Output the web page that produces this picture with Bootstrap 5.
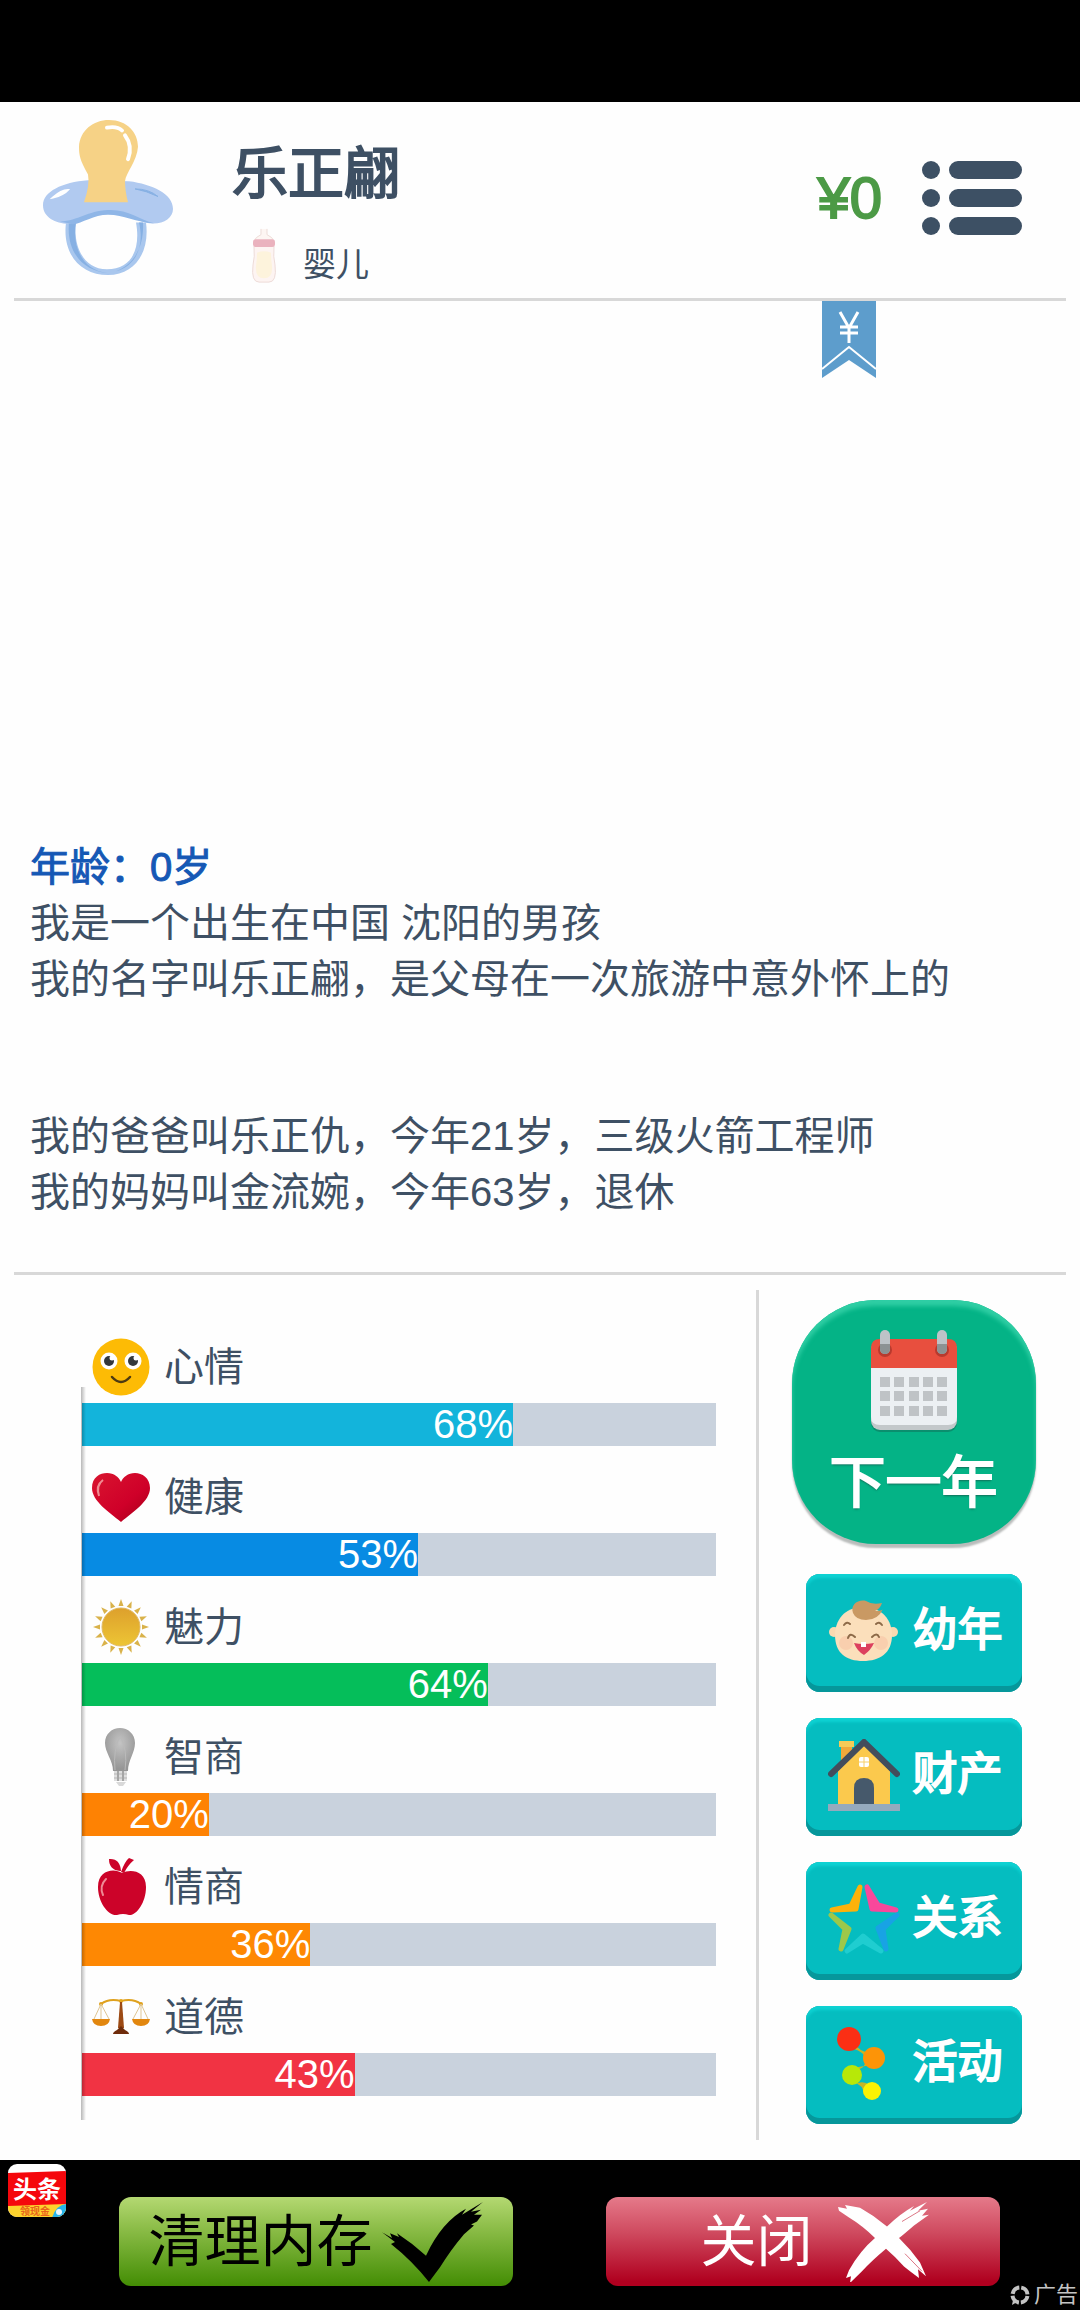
<!DOCTYPE html>
<html lang="zh-CN">
<head>
<meta charset="utf-8">
<meta name="viewport" content="width=device-width, initial-scale=1">
<title>人生模拟</title>
<link href="https://cdn.jsdelivr.net/npm/bootstrap@5.3.0/dist/css/bootstrap.min.css" rel="stylesheet">
<style>
  body { font-family: "Liberation Sans", "Noto Sans CJK SC", sans-serif; color: #3e5064; background: #fefefe; font-size: 40px; line-height: 56px; }
  svg { display: block; flex: none; }
  .status-strip { height: 102px; background: #000; }
  .profile { min-height: 199px; margin: 0 14px; border-bottom: 3px solid #d8d8d8; padding: 0 44px 5px 28px; }
  .profile-info { padding-top: 31px; margin-left: 58px; }
  .profile-name { font-size: 56px; line-height: 64px; margin: 0 0 21px; font-weight: 400; -webkit-text-stroke: 2px #3e5064; }
  .stage { font-size: 33px; line-height: 38px; gap: 26px; padding-left: 19px; }
  .money { font-size: 58px; line-height: 64px; color: #4c9a46; -webkit-text-stroke: 2px #4c9a46; margin-right: 40px; }
  .ribbon { top: 100%; right: 190px; margin-top: 3px; }
  .diary { padding: 0 30px 52px; }
  .diary p { margin: 0; }
  .diary .age { font-size: 40px; line-height: 56px; color: #1558b5; margin: 0; font-weight: 400; -webkit-text-stroke: 1px #1558b5; }
  .diary .parents { margin-top: 101px; }
  .panel-top { border-top: 3px solid #d8d8d8; margin: 0 14px; }
  .stats { flex: 0 0 70%; padding: 41px 40px 0 82px; }
  .stats-list::before { content: ""; position: absolute; left: -1px; top: 71px; bottom: -24px; width: 5px; background: linear-gradient(90deg, rgba(0,0,0,.28), rgba(0,0,0,0)); z-index: 1; }
  .stat-label { height: 87px; padding: 14px 0 0 10px; gap: 14px; }
  .stat-bar { height: 43px; border-radius: 0; background: #c9d2dd; font-size: 40px; }
  .stat-bar .progress-bar { text-align: right; color: #fff; line-height: 43px; }
  .actions { border-left: 3px solid #d8d8d8; margin: 15px 0 20px; padding: 10px 12px 16px 0; gap: 26px; }
  .next-year { width: 244px; height: 244px; margin-bottom: 4px; border: 0; border-radius: 84px; background: #04b386; color: #fff; font-size: 56px; line-height: 64px; gap: 18px; box-shadow: inset 0 6px 4px #2fcea4, 0 4px 2px #b9bcbb; text-shadow: 0 2px 2px #11705a; -webkit-text-stroke: 2px #fff; padding: 0; }
  .act { width: 216px; height: 118px; border: 0; border-radius: 14px; background: #05bdc0; color: #fff; font-size: 45px; line-height: 56px; gap: 12px; padding: 0 0 4px 4px; box-shadow: inset 0 -6px 0 #06979b, inset 0 4px 3px #0ed2d3, inset 0 0 2px #067f82; text-shadow: 0 -1px 1px #0b6062; -webkit-text-stroke: 2px #fff; }
  .dock { background: #000; min-height: 150px; padding: 37px 80px 24px 119px; }
  .dock-btn { width: 394px; height: 89px; border: 0; border-radius: 12px; font-size: 56px; line-height: 64px; padding: 0; }
  .clean { background: linear-gradient(#b4d872, #8cbd48 35%, #438d04); color: #000; gap: 9px; }
  .close-ad { background: linear-gradient(#e57a8a, #cf4a5f 40%, #b0001f 95%); color: #fff; gap: 25px; padding-left: 24px; }
  .app-logo { left: 8px; top: 4px; }
  .ad-tag { right: 2px; bottom: 3px; font-size: 22px; line-height: 24px; color: #c4c4c4; gap: 4px; }
</style>
<script src="https://cdn.jsdelivr.net/npm/bootstrap@5.3.0/dist/js/bootstrap.bundle.min.js"></script>
</head>
<body>
<div class="d-flex flex-column min-vh-100">
  <div class="status-strip"></div>

  <header class="profile d-flex align-items-center position-relative">
    <svg width="132" height="157" viewBox="0 0 132 164" preserveAspectRatio="none" aria-hidden="true">
      <path d="M24 108 C20 142 39 163 66 163 C93 163 108 139 104 108 L94 108 C99 137 89 157 65 157 C41 157 31 132 34 108 Z" fill="#a9c7ee"/>
      <path d="M27 108 C24 140 42 159 66 161 C38 158 30 130 34 108 Z" fill="#86b0e3"/>
      <path d="M97 108 C103 134 93 154 74 159 C96 150 102 128 101 108Z" fill="#86b0e3"/>
      <path d="M46 64 C20 66 1 76 1 90 C1 104 17 111 31 109 C44 105 50 100 64 99 C80 98 90 104 103 108 C118 112 131 105 131 94 C131 78 110 68 87 65 Z" fill="#b1caf0"/>
      <path d="M18 107 C37 106 45 96 66 95 C86 94 97 105 112 109 C94 108 82 100 66 100 C52 100 40 109 31 110Z" fill="#8fb6e7"/>
      <path d="M11 82 q8 -8 15 -8 q-4 5 -15 8z" fill="#fff" stroke="#fff" stroke-width="2"/>
      <path d="M93 73 q11 2 23 8 q-9 -8 -23 -8z" fill="#86b0e3" stroke="#86b0e3"/>
      <path d="M42 87 Q48 69 46 58 C38 43 37 38 37 29 C38 12 51 1 67 1 C85 1 96 14 96 29 C95 44 84 56 83 65 Q83 75 86 87 Z" fill="#f6d286"/>
      <path d="M65 9 Q75 7 80 12 M83 17 Q91 28 86 42" fill="none" stroke="#fff" stroke-width="4" stroke-linecap="round"/>
    </svg>
    <div class="profile-info">
      <h1 class="profile-name">乐正翩</h1>
      <div class="stage d-flex align-items-end">
        <svg width="26" height="57" viewBox="0 0 26 60" preserveAspectRatio="none" aria-hidden="true">
          <path d="M10 2v6q-6 3-7 7h20q-1-4-7-7V2" fill="#fdf6f3" stroke="#ecdcd7"/>
          <path d="M3 20 Q4 32 2 40 Q0 58 8 58 H18 Q26 58 24 40 Q22 32 23 20Z" fill="#fdf4f2" stroke="#ecdad7"/>
          <path d="M6 27 Q13 24 20 27 Q20 34 21 41 Q22 54 13 54 Q4 54 5 41 Q6 34 6 27Z" fill="#fdf3dc"/>
          <rect x="2" y="13" width="22" height="8" rx="3" fill="#eab2be"/>
        </svg>
        <span>婴儿</span>
      </div>
    </div>
    <span class="money ms-auto">¥0</span>
    <button type="button" class="btn p-0 border-0" aria-label="菜单">
      <svg width="100" height="76" viewBox="0 0 100 76" fill="#3d5064"><circle cx="9" cy="10" r="9"/><circle cx="9" cy="38" r="9"/><circle cx="9" cy="66" r="9"/><rect x="27" y="1" width="73" height="18" rx="9"/><rect x="27" y="29" width="73" height="18" rx="9"/><rect x="27" y="57" width="73" height="18" rx="9"/></svg>
    </button>
    <svg class="ribbon position-absolute" width="54" height="77" viewBox="0 0 54 77" aria-hidden="true">
      <path d="M0 0H54V77L27 59L0 77Z" fill="#5d9dcc"/>
      <path d="M0 68L27 46L54 68" fill="none" stroke="#fff" stroke-width="2"/>
      <path d="M18 11L27 27L36 11M27 27V42M18 26H36M18 32H36" fill="none" stroke="#fff" stroke-width="3"/>
    </svg>
  </header>

  <main class="flex-grow-1 d-flex flex-column">
    <section class="diary flex-grow-1 d-flex flex-column justify-content-end">
      <h2 class="age">年龄：0岁</h2>
      <p>我是一个出生在中国 沈阳的男孩</p>
      <p>我的名字叫乐正翩，是父母在一次旅游中意外怀上的</p>
      <p class="parents">我的爸爸叫乐正仇，今年21岁，三级火箭工程师</p>
      <p>我的妈妈叫金流婉，今年63岁，退休</p>
    </section>
    <div class="panel-top"></div>
    <section class="d-flex">
      <div class="stats">
        <div class="stats-list position-relative">
          <div class="stat-label d-flex align-items-center">
            <svg width="58" height="58" viewBox="0 0 58 58" aria-hidden="true"><circle cx="29" cy="29" r="28.500" fill="#fdbb05"/><circle cx="17" cy="23" r="8.500" fill="#fff"/><circle cx="41" cy="23" r="8.500" fill="#fff"/><circle cx="17" cy="23" r="5" fill="#33383c"/><circle cx="41" cy="23" r="5" fill="#33383c"/><circle cx="20" cy="20" r="2.500" fill="#fff"/><circle cx="44" cy="20" r="2.500" fill="#fff"/><path d="M20 39Q29 49 38 39" fill="none" stroke="#4d3a12" stroke-width="2.500" stroke-linecap="round"/></svg>
            <span id="s1">心情</span>
          </div>
          <div class="progress stat-bar" role="progressbar" aria-labelledby="s1" aria-valuenow="68" aria-valuemin="0" aria-valuemax="100"><div class="progress-bar" style="width:68%;background:#13b4db">68%</div></div>

          <div class="stat-label d-flex align-items-center">
            <svg width="58" height="58" viewBox="0 0 58 58" aria-hidden="true"><defs><linearGradient id="hg" x1="0" y1="0" x2="1" y2="1"><stop offset="0" stop-color="#d9152f"/><stop offset=".6" stop-color="#cf0029"/><stop offset="1" stop-color="#a30018"/></linearGradient></defs><path d="M29 54C17 44 0 33 0 20C0 9 8 5 15 5C22 5 27 9 29 14C31 9 36 5 43 5C50 5 58 10 58 20C58 33 41 44 29 54Z" fill="url(#hg)"/><path d="M11 12Q3 18 7 28Q4 17 11 12Z" fill="#f9a9ac" stroke="#f08c92" stroke-width="2"/></svg>
            <span id="s2">健康</span>
          </div>
          <div class="progress stat-bar" role="progressbar" aria-labelledby="s2" aria-valuenow="53" aria-valuemin="0" aria-valuemax="100"><div class="progress-bar" style="width:53%;background:#078be3">53%</div></div>

          <div class="stat-label d-flex align-items-center">
            <svg width="58" height="58" viewBox="0 0 58 58" aria-hidden="true"><defs><linearGradient id="sg" x1="0" y1="0" x2="0" y2="1"><stop offset="0" stop-color="#dda02c"/><stop offset="1" stop-color="#edc535"/></linearGradient><g id="ray"><path d="M29 1L31.500 8H26.500Z"/></g><g id="rq"><use href="#ray"/><use href="#ray" transform="rotate(22.500 29 29)"/><use href="#ray" transform="rotate(45 29 29)"/><use href="#ray" transform="rotate(67.500 29 29)"/></g></defs><g fill="#d9b24a"><use href="#rq"/><use href="#rq" transform="rotate(90 29 29)"/><use href="#rq" transform="rotate(180 29 29)"/><use href="#rq" transform="rotate(270 29 29)"/></g><circle cx="29" cy="29" r="19" fill="url(#sg)" stroke="#e0b860"/></svg>
            <span id="s3">魅力</span>
          </div>
          <div class="progress stat-bar" role="progressbar" aria-labelledby="s3" aria-valuenow="64" aria-valuemin="0" aria-valuemax="100"><div class="progress-bar" style="width:64%;background:#05be5a">64%</div></div>

          <div class="stat-label d-flex align-items-center">
            <svg width="58" height="58" viewBox="0 0 58 58" aria-hidden="true"><defs><radialGradient id="bg" cx=".5" cy=".35" r=".6"><stop offset="0" stop-color="#c4c4c4"/><stop offset="1" stop-color="#969696"/></radialGradient></defs><path d="M28 0C20 0 13 6 13 15C13 25 21 32 21 43H36C36 32 43 25 43 15C43 6 36 0 28 0Z" fill="url(#bg)"/><path d="M23 42Q21 22 28 8Q36 22 33 42" fill="none" stroke="#bababa"/><path d="M22 43H35V53H22Z" fill="#dedede"/><path d="M22 46h13M22 50h13" stroke="#b5b5b5"/><path d="M26 43V53M31 43V53" stroke="#a5a5a5" stroke-width="2"/><path d="M24 54h10l-3 4h-4z" fill="#d8d8d8"/></svg>
            <span id="s4">智商</span>
          </div>
          <div class="progress stat-bar" role="progressbar" aria-labelledby="s4" aria-valuenow="20" aria-valuemin="0" aria-valuemax="100"><div class="progress-bar" style="width:20%;background:#fe8203">20%</div></div>

          <div class="stat-label d-flex align-items-center">
            <svg width="58" height="58" viewBox="0 0 58 58" aria-hidden="true"><g fill="#cc0329"><path d="M30 15C38 11 54 12 54 29C54 45 44 58 37 57Q31 55 25 57C16 58 6 44 6 29C6 12 22 10 30 15Z"/><path d="M28 13Q17 12 17 1Q28 0 29 13Z"/><path d="M29 14Q33 3 37 0L42 2Q36 7 32 15Z"/></g><path d="M14 21Q7 28 11 37" fill="none" stroke="#ee8b95" stroke-width="2" stroke-linecap="round"/></svg>
            <span id="s5">情商</span>
          </div>
          <div class="progress stat-bar" role="progressbar" aria-labelledby="s5" aria-valuenow="36" aria-valuemin="0" aria-valuemax="100"><div class="progress-bar" style="width:36%;background:#fe8803">36%</div></div>

          <div class="stat-label d-flex align-items-center">
            <svg width="58" height="58" viewBox="0 0 58 58" aria-hidden="true"><path d="M9 16Q17 10 29 13Q41 10 49 16" fill="none" stroke="#dfa11d" stroke-width="2"/><circle cx="29" cy="13" r="2" fill="#e4a51c"/><circle cx="9" cy="16" r="2" fill="#dfa11d"/><circle cx="49" cy="16" r="2" fill="#dfa11d"/><path d="M9 16L2 31M9 16V31M9 16L17 31M49 16L41 31M49 16V31M49 16L56 31" stroke="#dfc694" fill="none"/><path d="M0 31H18Q17 38 9 38Q1 38 0 31ZM40 31H58Q57 38 49 38Q41 38 40 31Z" fill="#e2870f"/><path d="M28 14H30L32 40H26Z" fill="#9c4a14"/><path d="M21 46Q21 44 25 42L29 38L33 42Q37 44 37 46Z" fill="#6f2c0b"/></svg>
            <span id="s6">道德</span>
          </div>
          <div class="progress stat-bar" role="progressbar" aria-labelledby="s6" aria-valuenow="43" aria-valuemin="0" aria-valuemax="100"><div class="progress-bar" style="width:43%;background:#f13343">43%</div></div>
        </div>
      </div>

      <div class="actions flex-grow-1 d-flex flex-column align-items-center">
        <button type="button" class="next-year d-flex flex-column align-items-center justify-content-center">
          <svg width="88" height="104" viewBox="0 0 88 104" aria-hidden="true">
            <rect x="1" y="14" width="86" height="89" rx="9" fill="#0b8f6e"/>
            <rect x="1" y="12" width="86" height="89" rx="9" fill="#c3c8ca"/>
            <path d="M1 30H87V88Q87 96 78 96H10Q1 96 1 88Z" fill="#ecf0f3"/>
            <path d="M1 39V19Q1 10 10 10H78Q87 10 87 19V39Z" fill="#e84f3e"/>
            <circle cx="15" cy="21" r="7" fill="#b83a2e"/><circle cx="72" cy="21" r="7" fill="#b83a2e"/>
            <rect x="10" y="1" width="10" height="24" rx="5" fill="#bdc3c7"/><rect x="67" y="1" width="10" height="24" rx="5" fill="#bdc3c7"/>
            <path d="M10 15H20V20Q20 25 15 25Q10 25 10 20ZM67 15H77V20Q77 25 72 25Q67 25 67 20Z" fill="#8c9293"/>
            <g fill="#bfc3c6"><path d="M10 48h10v10h-10zM24 48h10v10h-10zM39 48h10v10h-10zM53 48h10v10h-10zM67 48h10v10h-10zM10 62h10v10h-10zM24 62h10v10h-10zM39 62h10v10h-10zM53 62h10v10h-10zM67 62h10v10h-10zM10 77h10v10h-10zM24 77h10v10h-10zM39 77h10v10h-10zM53 77h10v10h-10zM67 77h10v10h-10z"/></g>
          </svg>
          <span>下一年</span>
        </button>
        <button type="button" class="act d-flex align-items-center justify-content-center">
          <svg width="72" height="72" viewBox="0 0 72 72" aria-hidden="true">
            <circle cx="6" cy="37" r="5" fill="#f9d9b1"/><circle cx="65" cy="37" r="5" fill="#f9d9b1"/>
            <path d="M35 12C55 12 64 26 64 40C64 58 52 66 35 66C18 66 7 58 7 40C7 26 16 12 35 12Z" fill="#fbdfbb"/>
            <circle cx="18" cy="48" r="7" fill="#f9cfae"/><circle cx="53" cy="48" r="7" fill="#f9cfae"/>
            <path d="M25 18C22 10 30 4 38 6Q44 10 54 8Q52 14 47 16Q54 16 55 14Q50 25 38 25Q28 25 25 18Z" fill="#c99963"/>
            <path d="M16 30Q19 26 22 29M48 29Q51 26 54 30M20 43Q22 37 27 42M44 42Q49 37 51 42" fill="none" stroke="#8d6a48" stroke-width="2" stroke-linecap="round"/>
            <path d="M26 48Q35 50 46 48Q43 55 36 60Q29 56 26 48Z" fill="#dc3f5e"/><path d="M33 47h5v5h-5z" fill="#fff"/>
          </svg>
          <span>幼年</span>
        </button>
        <button type="button" class="act d-flex align-items-center justify-content-center">
          <svg width="72" height="72" viewBox="0 0 72 72" aria-hidden="true">
            <path d="M13 4H24V24H13Z" fill="#f0a83a"/><rect x="11" y="2" width="15" height="6" fill="#f5cb58"/>
            <path d="M10 66V32L36 5L62 32V66Z" fill="#fbc94d"/>
            <path d="M3 35L36 3L69 35" fill="none" stroke="#434d5c" stroke-width="6" stroke-linecap="round"/>
            <rect x="31" y="18" width="10" height="10" rx="2" fill="#fff"/><path d="M36 18V28M31 23H41" stroke="#f6cf69"/>
            <path d="M26 66V49Q26 39 36 39Q46 39 46 49V66Z" fill="#46596b"/>
            <rect x="0" y="65" width="72" height="7" fill="#95aabd"/>
          </svg>
          <span>财产</span>
        </button>
        <button type="button" class="act d-flex align-items-center justify-content-center">
          <svg width="72" height="72" viewBox="0 0 72 72" stroke-width="5" stroke-linecap="round" stroke-linejoin="round" aria-hidden="true">
            <path d="M32 4L28 26L4 27L23 23Z" fill="#fdb20a" stroke="#fdb20a"/><path d="M39 4L44 26L68 27L50 22Z" fill="#f8489b" stroke="#f8489b"/>
            <path d="M3 32L21 46L13 66L17 46Z" fill="#9cc84a" stroke="#9cc84a"/><path d="M69 32L50 45L58 66L55 46Z" fill="#18a3e4" stroke="#18a3e4"/>
            <path d="M19 68L35 53L53 68L35 58Z" fill="#1fcdd0" stroke="#1fcdd0"/>
          </svg>
          <span>关系</span>
        </button>
        <button type="button" class="act d-flex align-items-center justify-content-center">
          <svg width="72" height="76" viewBox="0 0 72 76" aria-hidden="true">
            <path d="M26 18Q34 30 46 26L42 40Q32 42 28 42L30 58Q36 56 42 60L36 70Q36 60 24 56L24 44Q38 46 38 34Q36 26 20 22Z" fill="#e8b40d" opacity=".85"/>
            <circle cx="21" cy="14" r="12" fill="#fb2f14"/><circle cx="46" cy="33" r="11" fill="#fd9407"/><circle cx="24" cy="50" r="10" fill="#b7e808"/><circle cx="44" cy="66" r="9" fill="#fbf203"/>
          </svg>
          <span>活动</span>
        </button>
      </div>
    </section>
  </main>

  <footer class="dock d-flex justify-content-between position-relative">
    <a href="#" class="app-logo position-absolute" aria-label="头条">
      <svg width="58" height="53" viewBox="0 0 58 53"><defs><clipPath id="lc"><rect width="58" height="53" rx="9"/></clipPath></defs><g clip-path="url(#lc)"><rect width="58" height="54" fill="#fff"/><path d="M0 9L58 7V42H0Z" fill="#f5070c"/><path d="M0 42L58 40V54H0Z" fill="#fdd22d"/><path d="M44 54Q48 41 58 40V54Z" fill="#26b4ea"/><text x="5" y="34" font-size="24" font-weight="700" font-family="Noto Sans CJK SC, sans-serif" fill="#fff">头条</text><text x="12" y="51" font-size="10" font-weight="700" font-family="Noto Sans CJK SC, sans-serif" fill="#e8621b">领现金</text><circle cx="51" cy="48" r="3" fill="#e9f8ff"/></g></svg>
    </a>
    <button type="button" class="dock-btn clean d-flex align-items-center justify-content-center">
      <span>清理内存</span>
      <svg width="102" height="80" viewBox="0 0 102 82" preserveAspectRatio="none" aria-hidden="true"><path d="M0 31L10 37L8 32L17 36L15 32Q30 42 44 55Q60 20 84 7L80 13L101 0L89 10L99 8L92 13L100 13L95 20L89 23L92 24L82 33Q68 50 58 67L47 82Q30 60 9 43L13 41Z"/></svg>
    </button>
    <button type="button" class="dock-btn close-ad d-flex align-items-center justify-content-center">
      <span>关闭</span>
      <svg width="92" height="80" viewBox="0 0 92 82" preserveAspectRatio="none" fill="#fff" aria-hidden="true"><path d="M0 5L9 7L7 3L22 6Q36 14 49 25Q62 12 76 4L72 9L89 0L80 9L90 7L84 14L91 13L76 24Q67 32 61 37Q73 49 82 62L88 76L80 69L81 78L72 71L66 66Q57 56 48 48Q34 60 24 71L12 83L13 76L8 78L11 70Q22 50 37 37Q24 24 11 16L1 9Z"/><path d="M64 20L82 9M67 53L84 71" stroke="#db7583" stroke-width="1"/></svg>
    </button>
    <div class="ad-tag position-absolute d-flex align-items-center">
      <svg width="20" height="20" viewBox="0 0 20 20" aria-hidden="true"><circle cx="10" cy="10" r="7.500" fill="none" stroke="#c4c4c4" stroke-width="4" stroke-dasharray="9.800 2" stroke-dashoffset="-1"/><path d="M2 20l1-5 4 2z" fill="#c4c4c4"/></svg>
      <span>广告</span>
    </div>
  </footer>
</div>
</body>
</html>
